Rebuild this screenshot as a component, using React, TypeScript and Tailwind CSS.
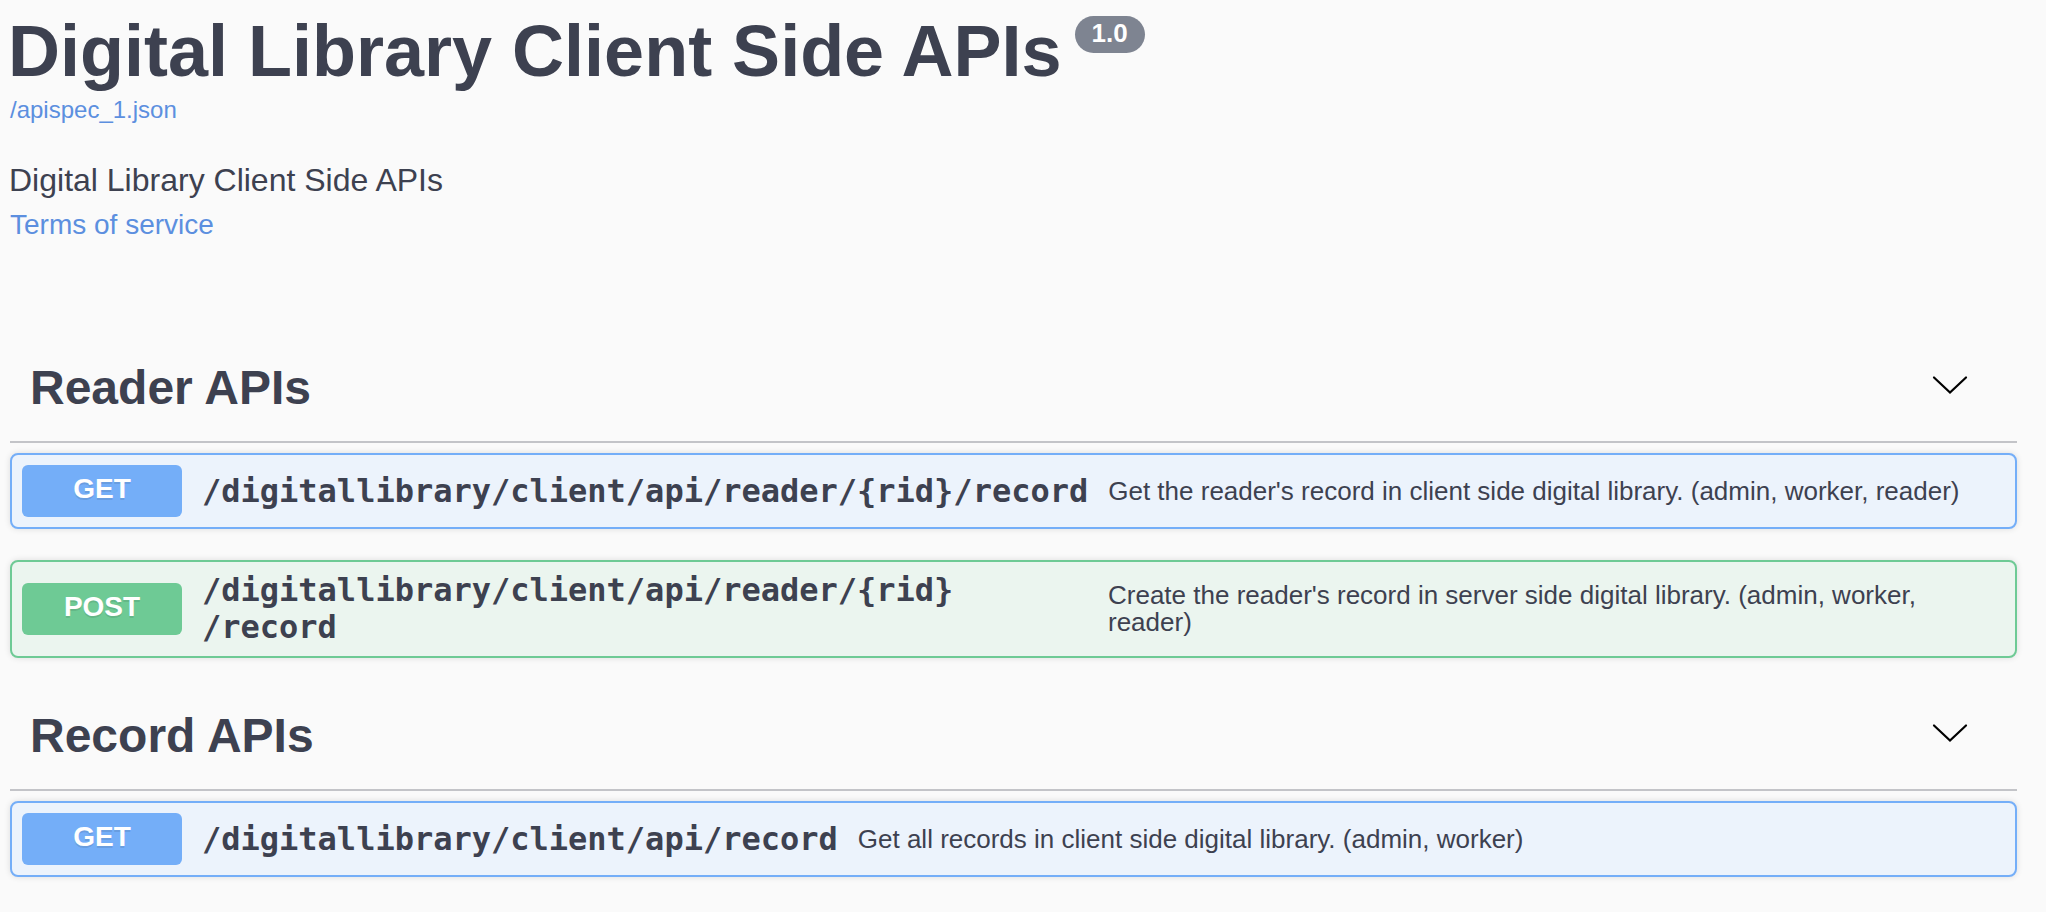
import React from "react";

const SANS = "font-['Liberation_Sans','Helvetica',Arial,sans-serif]";
const MONO = "font-['DejaVu_Sans_Mono','Liberation_Mono',monospace]";

function Chevron() {
  return (
    <svg width="40" height="40" viewBox="0 0 40 40" className="shrink-0">
      <polyline
        points="4,9.5 20,24.5 36,9.5"
        fill="none"
        stroke="#000"
        strokeWidth="2.2"
        strokeLinecap="round"
        strokeLinejoin="miter"
      />
    </svg>
  );
}

function TagHeader({ title }: { title: string }) {
  return (
    <div className="flex h-[106px] items-center justify-between border-b-2 border-[#c3c4c8] pb-[3px] pl-[20px] pr-[47px]">
      <h3 className={`${SANS} text-[48px] font-bold leading-[56px] text-[#3d4150]`}>{title}</h3>
      <Chevron />
    </div>
  );
}

type Op = {
  method: "GET" | "POST";
  path: React.ReactNode;
  desc: string;
  pathWidth?: string;
};

function OpBlock({ op, className }: { op: Op; className?: string }) {
  const isGet = op.method === "GET";
  return (
    <div
      className={`flex items-center rounded-[8px] border-2 p-[10px] shadow-[0_0_6px_rgba(0,0,0,0.12)] ${
        isGet ? "border-[#74aef8] bg-[#ecf3fc]" : "border-[#6eca95] bg-[#ebf5ef]"
      } ${className ?? ""}`}
    >
      <div
        className={`${SANS} flex h-[52px] w-[160px] shrink-0 items-center justify-center rounded-[6px] pb-[4px] text-[28px] font-bold text-white [text-shadow:0_2px_0_rgba(0,0,0,0.1)] ${
          isGet ? "bg-[#74aef8]" : "bg-[#6eca95]"
        }`}
      >
        {op.method}
      </div>
      <div
        className={`${MONO} shrink-0 px-[20px] text-[32px] font-bold leading-[37px] text-[#3d4150] ${op.pathWidth ?? ""}`}
      >
        {op.path}
      </div>
      <div className={`${SANS} min-w-0 flex-1 text-[26px] leading-[27px] text-[#3d4150]`}>{op.desc}</div>
    </div>
  );
}

export default function App() {
  return (
    <div className="min-h-[912px] w-full bg-[#fafafa] pl-[10px] pr-[29px] pt-[11px]">
      <div className="flex items-start">
        <h2 className={`${SANS} -ml-[2px] text-[72px] font-bold leading-[80px] text-[#3d4150]`}>
          Digital Library Client Side APIs
        </h2>
        <span
          className={`${SANS} ml-[13px] mt-[5px] flex h-[37px] items-center rounded-full bg-[#7e8491] px-[17px] pb-[3px] text-[26px] font-bold leading-none text-white`}
        >
          1.0
        </span>
      </div>
      <div className={`${SANS} mt-[5px] text-[24px] leading-[28px] text-[#5c8fdf]`}>/apispec_1.json</div>
      <div className={`${SANS} -ml-[1px] mt-[36px] text-[32px] leading-[40px] text-[#3d4150]`}>
        Digital Library Client Side APIs
      </div>
      <div className={`${SANS} mt-[9px] text-[28px] leading-[32px] text-[#5c8fdf]`}>Terms of service</div>

      <div className="mt-[96px]">
        <TagHeader title="Reader APIs" />
        <div className="mt-[10px]">
          <OpBlock
            op={{
              method: "GET",
              path: "/digitallibrary/client/api/reader/{rid}/record",
              desc: "Get the reader's record in client side digital library. (admin, worker, reader)",
            }}
          />
          <OpBlock
            className="mt-[31px]"
            op={{
              method: "POST",
              path: (
                <>
                  /digitallibrary/client/api/reader/{"{rid}"}
                  <br />
                  /record
                </>
              ),
              pathWidth: "w-[926px]",
              desc: "Create the reader's record in server side digital library. (admin, worker, reader)",
            }}
          />
        </div>
      </div>

      <div className="mt-[27px]">
        <TagHeader title="Record APIs" />
        <div className="mt-[10px]">
          <OpBlock
            op={{
              method: "GET",
              path: "/digitallibrary/client/api/record",
              desc: "Get all records in client side digital library. (admin, worker)",
            }}
          />
        </div>
      </div>
    </div>
  );
}
